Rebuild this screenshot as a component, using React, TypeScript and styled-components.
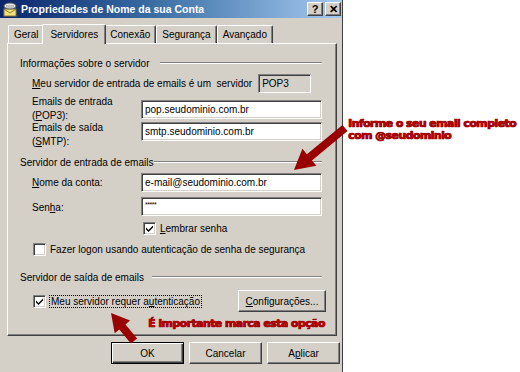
import styled, { createGlobalStyle } from "styled-components";

const GlobalStyle = createGlobalStyle`
  html, body {
    margin: 0;
    padding: 0;
    background: #ffffff;
  }
  body {
    font-family: "Liberation Sans", Arial, sans-serif;
    font-size: 10px;
    color: #000000;
  }
`;

const Page = styled.div`
  position: relative;
  width: 520px;
  height: 372px;
  display: flex;
  overflow: hidden;
`;

const Dialog = styled.div`
  width: 342px;
  height: 372px;
  background: #d4d0c8;
  border-right: 1px solid #404040;
  display: flex;
  flex-direction: column;
`;

const TitleBar = styled.div`
  height: 18px;
  display: flex;
  align-items: center;
  background: linear-gradient(to right, #0a246a 0%, #3a6ea5 45%, #a6caf0 100%);
  padding: 0 1px 0 2px;
`;

const TitleText = styled.div`
  flex: 1;
  color: #ffffff;
  font-weight: bold;
  font-size: 10.5px;
  margin-left: 3px;
  white-space: nowrap;
`;

const CaptionButton = styled.div`
  width: 14px;
  height: 12px;
  margin-left: 2px;
  background: #d4d0c8;
  border-top: 1px solid #ffffff;
  border-left: 1px solid #ffffff;
  border-right: 1px solid #404040;
  border-bottom: 1px solid #404040;
  box-shadow: inset -1px -1px 0 #808080;
  display: flex;
  align-items: center;
  justify-content: center;
  font-weight: bold;
  font-size: 11px;
  line-height: 1;
`;

const TabsRow = styled.div`
  display: flex;
  align-items: flex-end;
  height: 25px;
  padding-left: 8px;
`;

const Tab = styled.div<{ $active?: boolean }>`
  height: ${(p) => (p.$active ? "19px" : "17px")};
  padding: 0 ${(p) => (p.$active ? "7px" : "5px")};
  margin: 0 ${(p) => (p.$active ? "-2px" : "0")};
  margin-bottom: ${(p) => (p.$active ? "-1px" : "0")};
  position: relative;
  z-index: ${(p) => (p.$active ? 2 : 1)};
  background: #d4d0c8;
  border-top: 1px solid #ffffff;
  border-left: 1px solid #ffffff;
  border-right: 1px solid #404040;
  box-shadow: inset -1px 0 0 #808080;
  border-radius: 2px 2px 0 0;
  display: flex;
  align-items: center;
  font-size: 10px;
  white-space: nowrap;
`;

const TabPanel = styled.div`
  margin: 0 5px 0 7px;
  height: 293px;
  box-sizing: border-box;
  border-top: 1px solid #ffffff;
  border-left: 1px solid #ffffff;
  border-right: 1px solid #404040;
  border-bottom: 1px solid #404040;
  box-shadow: inset -1px -1px 0 #808080;
  padding: 6px 12px 0 12px;
  display: flex;
  flex-direction: column;
`;

const GroupHeader = styled.div<{ $gap: number; $top: number }>`
  display: flex;
  align-items: center;
  height: 14px;
  margin-top: ${(p) => p.$top}px;
  white-space: nowrap;
  &::after {
    content: "";
    flex: 1;
    margin-left: ${(p) => p.$gap}px;
    margin-right: 2px;
    height: 0;
    border-top: 1px solid #808080;
    border-bottom: 1px solid #ffffff;
  }
`;

const Indented = styled.div`
  padding-left: 12px;
  display: flex;
  flex-direction: column;
`;

const FieldRow = styled.div<{ $top: number }>`
  display: grid;
  grid-template-columns: 109px 181px;
  align-items: start;
  margin-top: ${(p) => p.$top}px;
  height: 19px;
`;

const Label = styled.div<{ $shift: number }>`
  line-height: 14px;
  margin-top: ${(p) => p.$shift}px;
  white-space: nowrap;
`;

const U = styled.span`
  text-decoration: underline;
`;

const Input = styled.div<{ $readOnly?: boolean }>`
  height: 19px;
  box-sizing: border-box;
  background: ${(p) => (p.$readOnly ? "#d4d0c8" : "#ffffff")};
  border-top: 1px solid #808080;
  border-left: 1px solid #808080;
  border-right: 1px solid #ffffff;
  border-bottom: 1px solid #ffffff;
  box-shadow: inset 1px 1px 0 #404040, inset -1px -1px 0 #d4d0c8;
  padding: 0 3px;
  display: flex;
  align-items: center;
  white-space: nowrap;
`;

const Masked = styled(Input)`
  font-size: 7px;
  align-items: flex-start;
  padding-top: 3px;
  letter-spacing: -0.5px;
`;

const ServerRow = styled.div`
  display: flex;
  align-items: center;
  margin-top: 4px;
  height: 19px;
  white-space: nowrap;
`;

const ServerBox = styled(Input)`
  width: 53px;
  margin-left: 6px;
`;

const CheckRow = styled.div<{ $top: number; $indent: number }>`
  display: flex;
  align-items: center;
  margin-top: ${(p) => p.$top}px;
  padding-left: ${(p) => p.$indent}px;
  height: 13px;
  white-space: nowrap;
`;

const Box = styled.div`
  width: 13px;
  height: 13px;
  box-sizing: border-box;
  background: #ffffff;
  border-top: 1px solid #808080;
  border-left: 1px solid #808080;
  border-right: 1px solid #ffffff;
  border-bottom: 1px solid #ffffff;
  box-shadow: inset 1px 1px 0 #404040, inset -1px -1px 0 #d4d0c8;
  margin-right: 4px;
  display: flex;
  align-items: center;
  justify-content: center;
  flex-shrink: 0;
`;

const Focus = styled.span`
  outline: 1px dotted #000000;
  padding: 0 1px;
`;

const OutgoingRow = styled.div`
  display: flex;
  align-items: center;
  justify-content: space-between;
  margin-top: 6px;
  height: 22px;
  padding-left: 13px;
  margin-right: -2px;
`;

const Button = styled.div<{ $default?: boolean; $width: number }>`
  width: ${(p) => p.$width}px;
  height: 22px;
  box-sizing: border-box;
  background: #d4d0c8;
  display: flex;
  align-items: center;
  justify-content: center;
  font-size: 10px;
  white-space: nowrap;
  border: 1px solid;
  border-color: ${(p) =>
    p.$default ? "#000000" : "#ffffff #404040 #404040 #ffffff"};
  box-shadow: ${(p) =>
    p.$default
      ? "inset 1px 1px 0 #ffffff, inset -1px -1px 0 #404040, inset -2px -2px 0 #808080"
      : "inset -1px -1px 0 #808080"};
`;

const Annotation = styled.div`
  color: #c80000;
  font-family: "DejaVu Sans", Verdana, sans-serif;
  font-weight: bold;
  font-size: 11px;
  letter-spacing: -0.6px;
  line-height: 12px;
  white-space: nowrap;
  -webkit-text-stroke: 0.6px #8a0000;
  text-shadow: 0.5px 0 0 #c80000, 0 0 1px #ffffff;
`;

const Note = styled(Annotation)`
  margin-top: 6px;
  padding-left: 128px;
`;

const ButtonBar = styled.div`
  display: flex;
  justify-content: flex-end;
  gap: 5px;
  padding: 6px 2px 0 0;
`;

const Side = styled.div`
  flex: 1;
  position: relative;
`;

const Callout = styled(Annotation)`
  position: absolute;
  left: 5px;
  top: 118px;
`;

const ArrowLayer = styled.svg`
  position: absolute;
  left: 0;
  top: 0;
  pointer-events: none;
`;

const Check = () => (
  <svg width="9" height="9" viewBox="0 0 9 9">
    <path d="M1 3.5 L3.5 6 L8 1.5 L8 3.5 L3.5 8 L1 5.5 Z" fill="#000" />
  </svg>
);

const AccountIcon = () => (
  <svg width="16" height="15" viewBox="0 0 16 15">
    <rect x="2" y="7" width="12" height="7" fill="#f4e27a" stroke="#8a7a30" />
    <path d="M2 7 L8 11 L14 7" fill="none" stroke="#8a7a30" />
    <ellipse cx="8" cy="4" rx="6" ry="3" fill="#e8e8e8" stroke="#606060" />
    <rect x="4" y="3" width="8" height="3" fill="#c0c0c0" />
  </svg>
);

export default function App() {
  return (
    <>
      <GlobalStyle />
      <Page>
        <Dialog>
          <TitleBar>
            <AccountIcon />
            <TitleText>Propriedades de Nome da sua Conta</TitleText>
            <CaptionButton>?</CaptionButton>
            <CaptionButton>✕</CaptionButton>
          </TitleBar>
          <TabsRow>
            <Tab>Geral</Tab>
            <Tab $active>Servidores</Tab>
            <Tab>Conexão</Tab>
            <Tab>Segurança</Tab>
            <Tab>Avançado</Tab>
          </TabsRow>
          <TabPanel>
            <GroupHeader $gap={10} $top={6}>Informações sobre o servidor</GroupHeader>
            <Indented>
              <ServerRow>
                <U>M</U>eu servidor de entrada de emails é um&nbsp; servidor
                <ServerBox $readOnly>POP3</ServerBox>
              </ServerRow>
              <FieldRow $top={7}>
                <Label $shift={-5}>
                  Emails de entrada
                  <br />(<U>P</U>OP3):
                </Label>
                <Input>pop.seudominio.com.br</Input>
              </FieldRow>
              <FieldRow $top={3}>
                <Label $shift={-1}>
                  Emails de saída
                  <br />(<U>S</U>MTP):
                </Label>
                <Input>smtp.seudominio.com.br</Input>
              </FieldRow>
            </Indented>
            <GroupHeader $gap={1} $top={14}>Servidor de entrada de emails</GroupHeader>
            <Indented>
              <FieldRow $top={4}>
                <Label $shift={3}>
                  <U>N</U>ome da conta:
                </Label>
                <Input>e-mail@seudominio.com.br</Input>
              </FieldRow>
              <FieldRow $top={5}>
                <Label $shift={4}>
                  Sen<U>h</U>a:
                </Label>
                <Masked>*****</Masked>
              </FieldRow>
              <CheckRow $top={6} $indent={111}>
                <Box>
                  <Check />
                </Box>
                <U>L</U>embrar senha
              </CheckRow>
              <CheckRow $top={8} $indent={1}>
                <Box />
                Fazer logon usando autenticação de senha de segurança
              </CheckRow>
            </Indented>
            <GroupHeader $gap={8} $top={14}>Servidor de saída de emails</GroupHeader>
            <OutgoingRow>
              <CheckRow $top={0} $indent={0}>
                <Box>
                  <Check />
                </Box>
                <Focus>
                  Meu servidor requer a<U>u</U>tenticação
                </Focus>
              </CheckRow>
              <Button $width={88}>
                <U>C</U>onfigurações...
              </Button>
            </OutgoingRow>
            <Note>É importante marca esta opção</Note>
          </TabPanel>
          <ButtonBar>
            <Button $default $width={73}>OK</Button>
            <Button $width={73}>Cancelar</Button>
            <Button $width={73}>
              A<U>p</U>licar
            </Button>
          </ButtonBar>
        </Dialog>
        <Side>
          <Callout>
            Informe o seu email completo
            <br />
            com @seudominio
          </Callout>
        </Side>
        <ArrowLayer width="520" height="372" viewBox="0 0 520 372">
          <polygon
            points="347.5,131.1 311.9,160.4 316.4,165.8 294,170 302.4,148.8 306.9,154.2 342.5,124.9"
            fill="#990000"
          />
          <polygon
            points="137.1,338.5 125.5,324.4 130.1,320.6 111,313 114.7,333.3 119.3,329.4 130.9,343.5"
            fill="#990000"
          />
        </ArrowLayer>
      </Page>
    </>
  );
}
